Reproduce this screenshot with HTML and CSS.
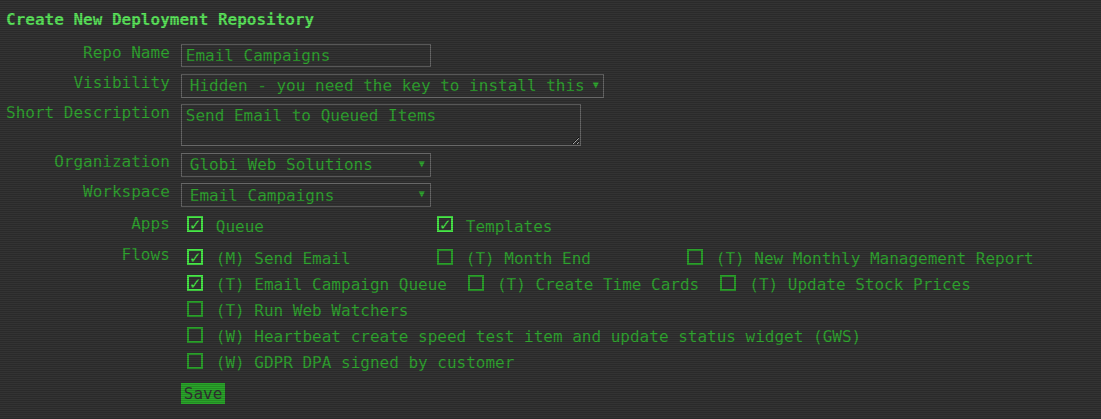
FILE: index.html
```html
<!DOCTYPE html>
<html>

<head>
    <title>Create New Deployment Repository</title>
    <link rel="stylesheet" href="styles.css">
</head>

<body>
    <div class="page">
        <h1 class="title">Create New Deployment Repository</h1>

        <form class="repo-form">
            <label class="field-label" for="repo-name">Repo Name</label>
            <div class="field">
                <input type="text" id="repo-name" class="text-input" value="Email Campaigns">
            </div>

            <label class="field-label" for="visibility">Visibility</label>
            <div class="field">
                <div class="select wide">
                    <span>Hidden - you need the key to install this</span>
                    <span class="arrow">&#9660;</span>
                </div>
            </div>

            <label class="field-label" for="short-desc">Short Description</label>
            <div class="field">
                <textarea id="short-desc" class="text-area">Send Email to Queued Items</textarea>
            </div>

            <label class="field-label">Organization</label>
            <div class="field">
                <div class="select">
                    <span>Globi Web Solutions</span>
                    <span class="arrow">&#9660;</span>
                </div>
            </div>

            <label class="field-label">Workspace</label>
            <div class="field">
                <div class="select">
                    <span>Email Campaigns</span>
                    <span class="arrow">&#9660;</span>
                </div>
            </div>

            <!-- apps -->
            <div class="field-label apps-label">Apps</div>
            <div class="check-list apps">
                <label class="check-item"><input type="checkbox" checked><span>Queue</span></label>
                <label class="check-item"><input type="checkbox" checked><span>Templates</span></label>
            </div>

            <!-- flows -->
            <div class="field-label flows-label">Flows</div>
            <div class="check-list">
                <label class="check-item"><input type="checkbox" checked><span>(M) Send Email</span></label>
                <label class="check-item"><input type="checkbox"><span>(T) Month End</span></label>
                <label class="check-item"><input type="checkbox"><span>(T) New Monthly Management Report</span></label>
                <label class="check-item"><input type="checkbox" checked><span>(T) Email Campaign Queue</span></label>
                <label class="check-item"><input type="checkbox"><span>(T) Create Time Cards</span></label>
                <label class="check-item"><input type="checkbox"><span>(T) Update Stock Prices</span></label>
                <label class="check-item"><input type="checkbox"><span>(T) Run Web Watchers</span></label>
                <label class="check-item"><input type="checkbox"><span>(W) Heartbeat create speed test item and update status widget (GWS)</span></label>
                <label class="check-item"><input type="checkbox"><span>(W) GDPR DPA signed by customer</span></label>
            </div>

            <div></div>
            <div class="actions">
                <button type="button" class="save-button">Save</button>
            </div>
        </form>
    </div>
</body>

</html>
```

FILE: styles.css
```css
html,
body {
    margin: 0;
    padding: 0;
}

body {
    font-family: "DejaVu Sans Mono", monospace;
    font-size: 16px;
    color: #30a530;
    background-color: #333333;
    min-height: 100vh;
}

/* scanlines over the whole screen */
body::after {
    content: '';
    position: fixed;
    top: 0;
    left: 0;
    right: 0;
    bottom: 0;
    pointer-events: none;
    background: repeating-linear-gradient(to bottom,
            rgba(0, 0, 0, 0.16) 0px,
            rgba(0, 0, 0, 0.16) 1px,
            transparent 1px,
            transparent 2px);
}

.page {
    padding: 10px 6px 0 6px;
}

.title {
    margin: 0;
    font-size: 16px;
    font-weight: bold;
    line-height: 19px;
    color: #5ce65c;
}

/** form grid **/
.repo-form {
    display: grid;
    grid-template-columns: auto 1fr;
    column-gap: 11px;
    row-gap: 6.5px;
    margin-top: 15px;
}

.field-label {
    text-align: right;
    line-height: 18px;
}

.field {
    display: flex;
}

.text-input,
.text-area,
.select {
    box-sizing: border-box;
    font-family: inherit;
    font-size: 16px;
    color: #30a530;
    background: transparent;
    border: 1px solid #686868;
    border-radius: 0;
    margin: 0;
}

.text-input {
    width: 250px;
    height: 23px;
    padding: 0 4px;
    outline: none;
}

.text-area {
    width: 400px;
    height: 42px;
    padding: 1px 4px;
    resize: both;
    line-height: 19px;
    outline: none;
}

.select {
    width: 250px;
    height: 24px;
    display: flex;
    align-items: center;
    justify-content: space-between;
    padding: 0 5px 0 8px;
    white-space: nowrap;
}

.select.wide {
    width: 423px;
    padding-right: 4px;
}

.select .arrow {
    font-size: 10px;
    margin-left: 6px;
    padding-bottom: 3px;
}

/** checkboxes **/
.apps-label {
    padding-top: 1px;
}

.flows-label {
    padding-top: 2px;
}

.check-list {
    display: flex;
    flex-wrap: wrap;
    align-items: center;
}

.check-list.apps {
    margin-top: -2.5px;
}

.check-item {
    display: flex;
    align-items: center;
    min-width: 250px;
    height: 26px;
    padding-right: 15px;
    box-sizing: border-box;
    white-space: nowrap;
}

.check-item span {
    padding-top: 4px;
}

.check-item input {
    appearance: none;
    -webkit-appearance: none;
    box-sizing: border-box;
    width: 16px;
    height: 16px;
    margin: 0 13px 0 6px;
    border: 2px solid #2ba02b;
    background: transparent;
    position: relative;
}

.check-item input:checked {
    border-color: #48e848;
}

.check-item input:checked::after {
    content: '\2713';
    position: absolute;
    left: 0px;
    top: -2px;
    font-size: 15px;
    color: #48e848;
}

/** save **/
.actions {
    margin-top: 2.5px;
}

.save-button {
    font-family: inherit;
    font-size: 16px;
    line-height: 21px;
    height: 21px;
    padding: 0 3px;
    border: none;
    border-radius: 0;
    background-color: #2aa52a;
    color: #333333;
    cursor: pointer;
}
```
